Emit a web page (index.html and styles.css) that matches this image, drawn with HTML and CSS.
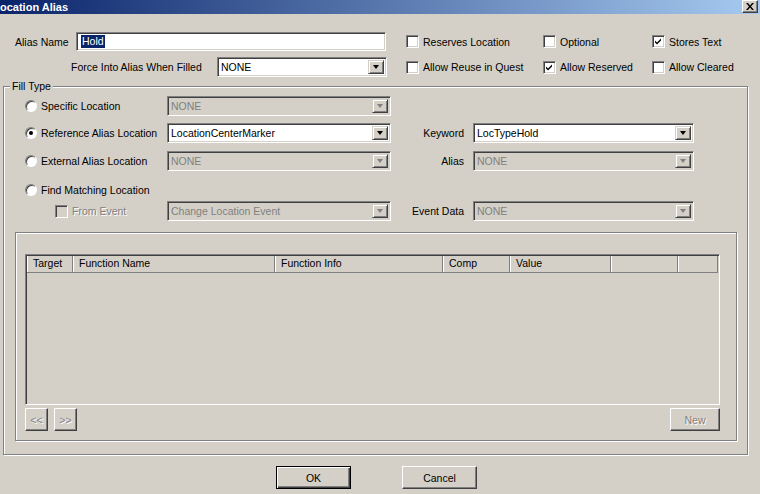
FILE: index.html
```html
<!DOCTYPE html>
<html lang="en">
<head>
    <meta charset="UTF-8">
    <title>Location Alias</title>
    <link rel="stylesheet" href="styles.css">
</head>
<body>
    <!-- Title bar -->
    <div class="titlebar">
        <span class="title">ocation Alias</span>
        <span class="close-btn">
            <svg width="8" height="7" viewBox="0 0 8 7"><path d="M0 0h2l2 2.5L6 0h2L5 3.5 8 7H6L4 4.5 2 7H0l3-3.5z"/></svg>
        </span>
    </div>

    <!-- Alias name + flags -->
    <div class="top">
        <div class="top-fields">
            <div class="name-row">
                <label class="name-label">Alias Name</label>
                <div class="textbox sunken"><span class="selection">Hold</span></div>
            </div>
            <div class="force-row">
                <label class="force-label">Force Into Alias When Filled</label>
                <div class="combo sunken force-combo"><span class="combo-text">NONE</span><span class="drop"></span></div>
            </div>
        </div>
        <div class="checks">
            <div class="check"><span class="cb sunken"></span>Reserves Location</div>
            <div class="check"><span class="cb sunken"></span>Optional</div>
            <div class="check"><span class="cb sunken"><svg width="11" height="11" viewBox="0 0 11 11"><path d="M2 4.5l2 2 4-4v2l-4 4-2-2z"/></svg></span>Stores Text</div>
            <div class="check"><span class="cb sunken"></span>Allow Reuse in Quest</div>
            <div class="check"><span class="cb sunken"><svg width="11" height="11" viewBox="0 0 11 11"><path d="M2 4.5l2 2 4-4v2l-4 4-2-2z"/></svg></span>Allow Reserved</div>
            <div class="check"><span class="cb sunken"></span>Allow Cleared</div>
        </div>
    </div>

    <!-- Fill Type group -->
    <div class="group">
        <span class="legend">Fill Type</span>
        <div class="fill-grid">
            <div class="radio-cell"><span class="rb"></span>Specific Location</div>
            <div class="combo sunken disabled"><span class="combo-text">NONE</span><span class="drop"></span></div>
            <div></div>
            <div></div>

            <div class="radio-cell"><span class="rb on"></span>Reference Alias Location</div>
            <div class="combo sunken"><span class="combo-text">LocationCenterMarker</span><span class="drop"></span></div>
            <div class="side-label">Keyword</div>
            <div class="combo sunken"><span class="combo-text">LocTypeHold</span><span class="drop"></span></div>

            <div class="radio-cell"><span class="rb"></span>External Alias Location</div>
            <div class="combo sunken disabled"><span class="combo-text">NONE</span><span class="drop"></span></div>
            <div class="side-label">Alias</div>
            <div class="combo sunken disabled"><span class="combo-text">NONE</span><span class="drop"></span></div>

            <div class="radio-cell"><span class="rb"></span>Find Matching Location</div>
            <div></div>
            <div></div>
            <div></div>

            <div class="radio-cell event-cell"><span class="cb sunken off"></span><span class="dim">From Event</span></div>
            <div class="combo sunken disabled"><span class="combo-text">Change Location Event</span><span class="drop"></span></div>
            <div class="side-label">Event Data</div>
            <div class="combo sunken disabled"><span class="combo-text">NONE</span><span class="drop"></span></div>
        </div>

        <div class="panel">
            <div class="list sunken">
                <div class="list-head">
                    <div class="col w-target">Target</div>
                    <div class="col w-name">Function Name</div>
                    <div class="col w-info">Function Info</div>
                    <div class="col w-comp">Comp</div>
                    <div class="col w-value">Value</div>
                    <div class="col w-e1"></div>
                    <div class="col w-e2"></div>
                </div>
            </div>
            <div class="panel-buttons">
                <button class="btn small" disabled>&lt;&lt;</button>
                <button class="btn small" disabled>&gt;&gt;</button>
                <button class="btn new" disabled>New</button>
            </div>
        </div>
    </div>

    <!-- Dialog buttons -->
    <div class="actions">
        <button class="btn default">OK</button>
        <button class="btn">Cancel</button>
    </div>
</body>
</html>
```

FILE: styles.css
```css
:root {
    --face: #d4d0c8;      /* classic 3d face */
    --shadow: #808080;
    --dark: #404040;
    --hilite: #ffffff;
    --navy: #0a246a;
    --font: "Liberation Sans", Arial, sans-serif;
}

* {
    box-sizing: border-box;
    margin: 0;
    padding: 0;
}

body {
    width: 760px;
    height: 494px;
    overflow: hidden;
    background: var(--face);
    color: #000;
    font-family: var(--font);
    font-size: 10.5px;
}

/* Title bar */
.titlebar {
    height: 14px;
    display: flex;
    align-items: center;
    justify-content: space-between;
    background: linear-gradient(to right, var(--navy), #a6caf0);
    overflow: hidden;
}

.title {
    color: #fff;
    font-weight: bold;
    font-size: 11px;
}

.close-btn {
    width: 16px;
    height: 13px;
    margin: -1px 2px 0 0;
    display: flex;
    align-items: center;
    justify-content: center;
    background: var(--face);
    border: 1px solid;
    border-color: var(--hilite) var(--dark) var(--dark) var(--hilite);
    box-shadow: inset -1px -1px var(--shadow);
}

/* Shared 3d bits */
.sunken {
    border: 1px solid;
    border-color: var(--shadow) var(--hilite) var(--hilite) var(--shadow);
    box-shadow: inset 1px 1px var(--dark), inset -1px -1px var(--face);
}

.textbox {
    width: 310px;
    height: 19px;
    background: #fff;
    padding: 2px 0 0 4px;
}

.selection {
    display: inline-block;
    background: var(--navy);
    color: #fff;
    height: 13px;
    line-height: 13px;
    padding: 0 1px;
}

.combo {
    height: 20px;
    display: flex;
    align-items: stretch;
    background: #fff;
}

.combo-text {
    flex: 1;
    padding-left: 3px;
    line-height: 18px;
    white-space: nowrap;
    overflow: hidden;
}

.drop {
    width: 16px;
    margin: 2px 2px 2px 0;
    display: flex;
    align-items: center;
    justify-content: center;
    background: var(--face);
    border: 1px solid;
    border-color: var(--face) var(--dark) var(--dark) var(--face);
    box-shadow: inset 1px 1px var(--hilite), inset -1px -1px var(--shadow);
}

.drop::after {
    content: "";
    border-style: solid;
    border-width: 4px 3.5px 0;
    border-color: #000 transparent transparent;
}

.combo.disabled {
    background: var(--face);
    color: var(--shadow);
}

.combo.disabled .drop::after {
    border-top-color: var(--shadow);
}

/* Top section */
.top {
    display: flex;
    padding-top: 18px;
}

.top-fields {
    width: 390px;
    display: flex;
    flex-direction: column;
    gap: 6px;
}

.name-row {
    display: flex;
    align-items: center;
    padding-left: 15px;
}

.name-label {
    width: 61px;
}

.force-row {
    display: flex;
    align-items: center;
    padding-left: 71px;
}

.force-label {
    width: 146px;
}

.force-combo {
    width: 170px;
}

.checks {
    margin-left: 16px;
    display: grid;
    grid-template-columns: 137px 109px auto;
    grid-template-rows: 19px 20px;
    row-gap: 6px;
    align-items: center;
}

.check {
    display: flex;
    align-items: center;
    gap: 4px;
}

.cb {
    width: 13px;
    height: 13px;
    background: #fff;
    display: flex;
}

.cb.off {
    background: var(--face);
}

/* Fill Type group */
.group {
    position: relative;
    width: 745px;
    height: 369px;
    margin: 9px 0 0 3px;
    padding: 9px 0 0 0;
    border: 1px solid var(--shadow);
    box-shadow: inset 1px 1px var(--hilite), 1px 1px var(--hilite);
}

.legend {
    position: absolute;
    top: -7px;
    left: 6px;
    padding: 0 2px;
    background: var(--face);
}

.fill-grid {
    margin-left: 21px;
    display: grid;
    grid-template-columns: 142px 224px 82px 221px;
    grid-template-rows: 27px 28px 29px 21px 20px;
    align-items: start;
}

.radio-cell {
    height: 20px;
    display: flex;
    align-items: center;
    gap: 4px;
}

.event-cell {
    padding-left: 30px;
}

.rb {
    position: relative;
    width: 12px;
    height: 12px;
    border-radius: 50%;
    background: #fff;
    border: 1px solid;
    border-color: var(--shadow) var(--hilite) var(--hilite) var(--shadow);
    box-shadow: inset 1px 1px var(--dark);
}

.rb.on::after {
    content: "";
    position: absolute;
    left: 3px;
    top: 3px;
    width: 4px;
    height: 4px;
    border-radius: 50%;
    background: #000;
}

.side-label {
    height: 20px;
    line-height: 20px;
    text-align: right;
    padding-right: 9px;
}

.dim {
    color: var(--shadow);
    text-shadow: 1px 1px var(--hilite);
}

/* Inner panel with function list */
.panel {
    width: 722px;
    height: 209px;
    margin: 11px 0 0 11px;
    padding: 21px 0 0 9px;
    border: 1px solid var(--shadow);
    box-shadow: inset 1px 1px var(--hilite), 1px 1px var(--hilite);
}

.list {
    width: 695px;
    height: 151px;
    padding: 1px;
}

.list-head {
    display: flex;
    height: 17px;
    border-bottom: 1px solid var(--shadow);
}

.col {
    height: 16px;
    line-height: 15px;
    padding-left: 5px;
    border-left: 1px solid var(--hilite);
    border-right: 1px solid var(--shadow);
}

.w-target { width: 46px; }
.w-name   { width: 202px; }
.w-info   { width: 168px; }
.w-comp   { width: 67px; }
.w-value  { width: 101px; }
.w-e1     { width: 67px; }
.w-e2     { width: 40px; }

.panel-buttons {
    width: 695px;
    margin-top: 3px;
    display: flex;
    gap: 6px;
}

/* Buttons */
.btn {
    width: 75px;
    height: 23px;
    background: var(--face);
    font-family: var(--font);
    font-size: 10.5px;
    color: #000;
    border: 1px solid;
    border-color: var(--hilite) var(--dark) var(--dark) var(--hilite);
    box-shadow: inset -1px -1px var(--shadow);
}

.btn:disabled {
    color: var(--shadow);
    text-shadow: 1px 1px var(--hilite);
}

.btn.small {
    width: 23px;
}

.btn.new {
    width: 50px;
    margin-left: auto;
}

.btn.default {
    border-color: #000;
    box-shadow: inset 1px 1px var(--hilite), inset -1px -1px var(--dark), inset -2px -2px var(--shadow);
}

.actions {
    display: flex;
    gap: 51px;
    margin-top: 11px;
    padding-left: 276px;
}
```
